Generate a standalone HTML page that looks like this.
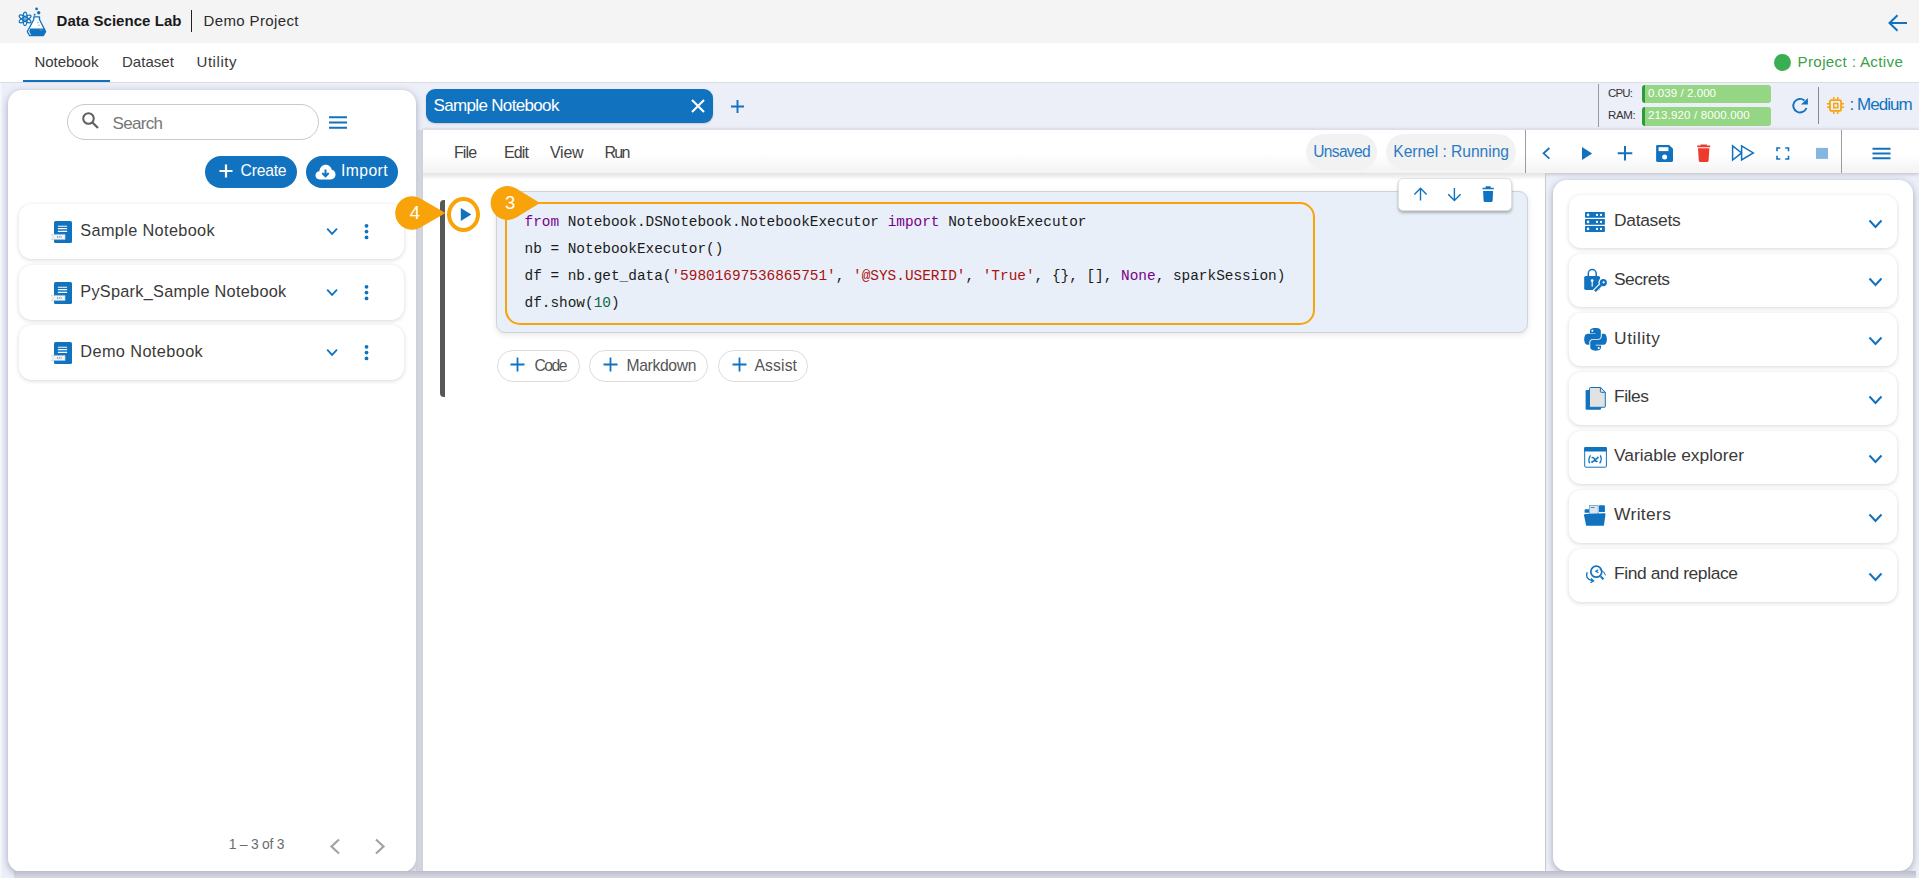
<!DOCTYPE html>
<html><head><meta charset="utf-8"><style>
html,body{margin:0;padding:0;width:1919px;height:878px;overflow:hidden;background:#eceff8;font-family:"Liberation Sans",sans-serif}
.box,.abs,.t{position:absolute;box-sizing:border-box}
.t{white-space:pre}
</style></head><body>
<div class="box" style="left:0;top:0;width:1919px;height:43px;background:#f4f4f4"></div><svg class="abs" style="left:17px;top:6px" width="32" height="32" viewBox="0 0 32 32">
<g fill="none" stroke="#1173bf" stroke-width="1.25">
<ellipse cx="8.1" cy="12.9" rx="6.7" ry="2.1" transform="rotate(90 8.1 12.9)"/>
<ellipse cx="8.1" cy="12.9" rx="6.7" ry="2.1" transform="rotate(30 8.1 12.9)"/>
<ellipse cx="8.1" cy="12.9" rx="6.7" ry="2.1" transform="rotate(-30 8.1 12.9)"/>
</g>
<circle cx="8.1" cy="12.9" r="1.2" fill="none" stroke="#1173bf" stroke-width="0.8"/>
<circle cx="19.6" cy="2.9" r="1.4" fill="#1173bf"/>
<circle cx="21.7" cy="6.7" r="1.7" fill="#1173bf"/>
<circle cx="17.6" cy="8.8" r="1" fill="#1173bf"/>
<path d="M16.8 10.8 H22.5 V13.5 L28.6 25.6 L26.3 29.6 H12.6 L10.3 25.6 L16.8 13.5 Z" fill="#fff" stroke="#1173bf" stroke-width="1.3" stroke-linejoin="round"/>
<path d="M13.2 22.4 H27.2 L28.6 25.6 L26.3 29.6 H14.3 L12.2 25.6 Z" fill="#1173bf"/>
<path d="M20 16.6 H21.8 M21 19.2 H22.8 M22.6 24 H25.4" stroke="#9a9a9a" stroke-width="0.8"/>
</svg><div class="t" style="left:56.50px;top:13.25px;font-size:15.00px;line-height:15.00px;color:#1a1a1a;font-weight:700;letter-spacing:0.052px;font-family:"Liberation Sans", sans-serif;">Data Science Lab</div><div class="box" style="left:190.5px;top:10px;width:1.6px;height:21.5px;background:#222"></div><div class="t" style="left:203.50px;top:13.25px;font-size:15.00px;line-height:15.00px;color:#2b2b2b;font-weight:400;letter-spacing:0.376px;font-family:"Liberation Sans", sans-serif;">Demo Project</div><svg class="abs" style="left:1887px;top:13px" width="22" height="20" viewBox="0 0 22 20">
<path d="M20 10 H3 M10.5 2.2 L2.5 10 L10.5 17.8" fill="none" stroke="#1173bf" stroke-width="2"/></svg><div class="box" style="left:0;top:43px;width:1919px;height:40px;background:#fff;border-bottom:1px solid #dcdde3"></div><div class="t" style="left:34.40px;top:54.45px;font-size:15.00px;line-height:15.00px;color:#3a3a3a;font-weight:400;letter-spacing:-0.030px;font-family:"Liberation Sans", sans-serif;">Notebook</div><div class="t" style="left:121.90px;top:54.45px;font-size:15.00px;line-height:15.00px;color:#3a3a3a;font-weight:400;letter-spacing:0.051px;font-family:"Liberation Sans", sans-serif;">Dataset</div><div class="t" style="left:196.50px;top:54.45px;font-size:15.00px;line-height:15.00px;color:#3a3a3a;font-weight:400;letter-spacing:0.556px;font-family:"Liberation Sans", sans-serif;">Utility</div><div class="box" style="left:23px;top:79.6px;width:87px;height:2.6px;background:#1173bf"></div><div class="box" style="left:1774px;top:54px;width:17px;height:17px;border-radius:50%;background:#3aaf52"></div><div class="t" style="left:1797.50px;top:54.28px;font-size:15.20px;line-height:15.20px;color:#3d9f49;font-weight:400;letter-spacing:0.331px;font-family:"Liberation Sans", sans-serif;">Project : Active</div><div class="box" style="left:0;top:83px;width:1919px;height:795px;background:#eceff8"></div><div class="box" style="left:0;top:83px;width:1.5px;height:795px;background:linear-gradient(90deg,#fbfbfd,#eef0f7)"></div><div class="box" style="left:8px;top:90px;width:408px;height:782px;background:#fff;border-radius:14px;box-shadow:0 2px 7px 0 rgba(40,50,80,.38)"></div><div class="box" style="left:67px;top:104px;width:252px;height:36px;border:1px solid #c9c9c9;border-radius:18px;background:#fff"></div><svg class="abs" style="left:81px;top:111px" width="19" height="19" viewBox="0 0 19 19">
<circle cx="7.5" cy="7.5" r="5.3" fill="none" stroke="#5f5f5f" stroke-width="2"/>
<path d="M11.5 11.5 L17 17" stroke="#5f5f5f" stroke-width="2.2"/></svg><div class="t" style="left:112.50px;top:114.65px;font-size:17.00px;line-height:17.00px;color:#767676;font-weight:400;letter-spacing:-0.673px;font-family:"Liberation Sans", sans-serif;">Search</div><svg class="abs" style="left:329px;top:116px" width="18" height="13" viewBox="0 0 18 13">
<path d="M0 1.2 H18 M0 6.5 H18 M0 11.8 H18" stroke="#1173bf" stroke-width="2"/></svg><div class="box" style="left:205px;top:156px;width:92px;height:32px;border-radius:16px;background:#1173bf"></div><svg class="abs" style="left:218.5px;top:164px" width="14" height="14" viewBox="0 0 14 14">
<path d="M7 0.5 V13.5 M0.5 7 H13.5" stroke="#fff" stroke-width="2.2"/></svg><div class="t" style="left:240.60px;top:162.85px;font-size:15.70px;line-height:15.70px;color:#fff;font-weight:400;letter-spacing:-0.225px;font-family:"Liberation Sans", sans-serif;">Create</div><div class="box" style="left:306px;top:156px;width:92px;height:32px;border-radius:16px;background:#1173bf"></div><svg class="abs" style="left:315px;top:164px" width="21" height="16" viewBox="0 0 21 16">
<path d="M5 15.5 C1.8 15.5 0.5 13.3 0.5 11.3 C0.5 9 2.2 7.3 4.4 7.2 C4.8 3.5 7.4 0.8 10.8 0.8 C13.8 0.8 16.2 2.8 16.8 5.8 C19 6.1 20.5 8 20.5 10.6 C20.5 13.4 18.6 15.5 15.8 15.5 Z" fill="#fff"/>
<path d="M10.5 5.5 V12 M7.3 9 L10.5 12.3 L13.7 9" stroke="#1173bf" stroke-width="2" fill="none"/></svg><div class="t" style="left:340.90px;top:162.85px;font-size:15.70px;line-height:15.70px;color:#fff;font-weight:400;letter-spacing:0.461px;font-family:"Liberation Sans", sans-serif;">Import</div><div class="box" style="left:19px;top:204px;width:385px;height:55px;border-radius:13px;background:#fff;box-shadow:0 1px 4px rgba(0,0,0,.16)"></div><svg class="abs" style="left:51px;top:221px" width="22" height="23" viewBox="0 0 22 23">
<rect x="3" y="0" width="18" height="22" rx="1.6" fill="#1173bf"/>
<path d="M6.9 5.3 H16.1 M6.9 7.6 H16.1 M6.9 10.4 H16.1" stroke="#fff" stroke-width="1.1"/>
<path d="M0.2 13.4 H14.1 V18.6 H0.2 L2.6 16 Z" fill="#f6f4f1" stroke="#a9c8e4" stroke-width="0.5"/>
<path d="M6.8 15 L6.2 16 L6.8 17 M9.8 15 L10.4 16 L9.8 17 M8.7 14.8 L7.9 17.2" fill="none" stroke="#3a83c6" stroke-width="0.6"/>
</svg><div class="t" style="left:80.30px;top:222.15px;font-size:16.30px;line-height:16.30px;color:#3a3a3a;font-weight:400;letter-spacing:0.352px;font-family:"Liberation Sans", sans-serif;">Sample Notebook</div><svg class="abs" style="left:326px;top:227px" width="13" height="9" viewBox="0 0 13 9">
<path d="M1.2 1.7 L6.1 6.9 L11 1.7" fill="none" stroke="#1173bf" stroke-width="1.8"/></svg><svg class="abs" style="left:363px;top:223px" width="6" height="17" viewBox="0 0 6 17">
<circle cx="3.5" cy="2.8" r="1.9" fill="#1173bf"/><circle cx="3.5" cy="8.6" r="1.9" fill="#1173bf"/><circle cx="3.5" cy="14.4" r="1.9" fill="#1173bf"/></svg><div class="box" style="left:19px;top:264.5px;width:385px;height:55px;border-radius:13px;background:#fff;box-shadow:0 1px 4px rgba(0,0,0,.16)"></div><svg class="abs" style="left:51px;top:281.5px" width="22" height="23" viewBox="0 0 22 23">
<rect x="3" y="0" width="18" height="22" rx="1.6" fill="#1173bf"/>
<path d="M6.9 5.3 H16.1 M6.9 7.6 H16.1 M6.9 10.4 H16.1" stroke="#fff" stroke-width="1.1"/>
<path d="M0.2 13.4 H14.1 V18.6 H0.2 L2.6 16 Z" fill="#f6f4f1" stroke="#a9c8e4" stroke-width="0.5"/>
<path d="M6.8 15 L6.2 16 L6.8 17 M9.8 15 L10.4 16 L9.8 17 M8.7 14.8 L7.9 17.2" fill="none" stroke="#3a83c6" stroke-width="0.6"/>
</svg><div class="t" style="left:80.30px;top:282.64px;font-size:16.30px;line-height:16.30px;color:#3a3a3a;font-weight:400;letter-spacing:0.266px;font-family:"Liberation Sans", sans-serif;">PySpark_Sample Notebook</div><svg class="abs" style="left:326px;top:287.5px" width="13" height="9" viewBox="0 0 13 9">
<path d="M1.2 1.7 L6.1 6.9 L11 1.7" fill="none" stroke="#1173bf" stroke-width="1.8"/></svg><svg class="abs" style="left:363px;top:283.5px" width="6" height="17" viewBox="0 0 6 17">
<circle cx="3.5" cy="2.8" r="1.9" fill="#1173bf"/><circle cx="3.5" cy="8.6" r="1.9" fill="#1173bf"/><circle cx="3.5" cy="14.4" r="1.9" fill="#1173bf"/></svg><div class="box" style="left:19px;top:325px;width:385px;height:55px;border-radius:13px;background:#fff;box-shadow:0 1px 4px rgba(0,0,0,.16)"></div><svg class="abs" style="left:51px;top:342px" width="22" height="23" viewBox="0 0 22 23">
<rect x="3" y="0" width="18" height="22" rx="1.6" fill="#1173bf"/>
<path d="M6.9 5.3 H16.1 M6.9 7.6 H16.1 M6.9 10.4 H16.1" stroke="#fff" stroke-width="1.1"/>
<path d="M0.2 13.4 H14.1 V18.6 H0.2 L2.6 16 Z" fill="#f6f4f1" stroke="#a9c8e4" stroke-width="0.5"/>
<path d="M6.8 15 L6.2 16 L6.8 17 M9.8 15 L10.4 16 L9.8 17 M8.7 14.8 L7.9 17.2" fill="none" stroke="#3a83c6" stroke-width="0.6"/>
</svg><div class="t" style="left:80.30px;top:343.14px;font-size:16.30px;line-height:16.30px;color:#3a3a3a;font-weight:400;letter-spacing:0.401px;font-family:"Liberation Sans", sans-serif;">Demo Notebook</div><svg class="abs" style="left:326px;top:348px" width="13" height="9" viewBox="0 0 13 9">
<path d="M1.2 1.7 L6.1 6.9 L11 1.7" fill="none" stroke="#1173bf" stroke-width="1.8"/></svg><svg class="abs" style="left:363px;top:344px" width="6" height="17" viewBox="0 0 6 17">
<circle cx="3.5" cy="2.8" r="1.9" fill="#1173bf"/><circle cx="3.5" cy="8.6" r="1.9" fill="#1173bf"/><circle cx="3.5" cy="14.4" r="1.9" fill="#1173bf"/></svg><div class="t" style="left:228.75px;top:838.38px;font-size:13.90px;line-height:13.90px;color:#6b6b6b;font-weight:400;letter-spacing:-0.251px;font-family:"Liberation Sans", sans-serif;">1 – 3 of 3</div><svg class="abs" style="left:328px;top:838px" width="60" height="17" viewBox="0 0 60 17">
<path d="M11 1.5 L3.5 8.5 L11 15.5" fill="none" stroke="#a3a3a3" stroke-width="2.2"/>
<path d="M48 1.5 L55.5 8.5 L48 15.5" fill="none" stroke="#a3a3a3" stroke-width="2.2"/></svg><div class="box" style="left:426px;top:89px;width:287px;height:34px;border-radius:9px;background:#1173bf;box-shadow:0 1px 2px rgba(0,0,0,.15)"></div><div class="t" style="left:433.50px;top:96.95px;font-size:17.00px;line-height:17.00px;color:#fff;font-weight:400;letter-spacing:-0.660px;font-family:"Liberation Sans", sans-serif;">Sample Notebook</div><svg class="abs" style="left:690px;top:99px" width="16" height="14" viewBox="0 0 16 14">
<path d="M2 1 L14 13 M14 1 L2 13" stroke="#fff" stroke-width="2.1"/></svg><svg class="abs" style="left:730px;top:99px" width="15" height="15" viewBox="0 0 15 15">
<path d="M7.5 1 V14 M1 7.5 H14" stroke="#1173bf" stroke-width="1.9"/></svg><div class="box" style="left:1598px;top:84px;width:1px;height:43px;background:#9a9a9a"></div><div class="t" style="left:1608.00px;top:87.52px;font-size:11.50px;line-height:11.50px;color:#333;font-weight:400;letter-spacing:-0.825px;font-family:"Liberation Sans", sans-serif;">CPU:</div><div class="t" style="left:1608.00px;top:109.52px;font-size:11.50px;line-height:11.50px;color:#333;font-weight:400;letter-spacing:-0.384px;font-family:"Liberation Sans", sans-serif;">RAM:</div><div class="box" style="left:1642px;top:85px;width:129px;height:17.5px;border-radius:3px;background:#95d684;border-left:3px solid #2e9a3a"></div><div class="box" style="left:1642px;top:107px;width:129px;height:19px;border-radius:3px;background:#95d684;border-left:3px solid #2e9a3a"></div><div class="t" style="left:1648.00px;top:87.82px;font-size:11.50px;line-height:11.50px;color:#fff;font-weight:400;letter-spacing:0.071px;font-family:"Liberation Sans", sans-serif;">0.039 / 2.000</div><div class="t" style="left:1648.00px;top:109.82px;font-size:11.50px;line-height:11.50px;color:#fff;font-weight:400;letter-spacing:0.152px;font-family:"Liberation Sans", sans-serif;">213.920 / 8000.000</div><svg class="abs" style="left:1790px;top:96px" width="19" height="19" viewBox="0 0 19 19">
<path d="M16.5 12 A6.8 6.8 0 1 1 14.4 4.4" fill="none" stroke="#1173bf" stroke-width="1.9"/>
<path d="M17.9 2 L17.9 8.4 L11 8.4 Z" fill="#1173bf"/></svg><div class="box" style="left:1817.5px;top:86.5px;width:1px;height:37px;background:#8a8a8a"></div><svg class="abs" style="left:1826px;top:96px" width="19" height="19" viewBox="0 0 19 19">
<rect x="3.95" y="4.05" width="11.1" height="10.7" rx="1.3" fill="none" stroke="#f9a30b" stroke-width="1.75"/>
<rect x="7.75" y="7.45" width="4.1" height="4.3" fill="none" stroke="#f9a30b" stroke-width="1.5"/>
<path d="M7.8 0.9 V3.3 M11.7 0.9 V3.3 M7.8 15.5 V18 M11.7 15.5 V18 M1 7.7 H3.2 M1 11.2 H3.2 M15.8 7.7 H18 M15.8 11.2 H18" stroke="#f9a30b" stroke-width="1.5"/></svg><div class="t" style="left:1849.40px;top:96.15px;font-size:17.00px;line-height:17.00px;color:#1173bf;font-weight:400;letter-spacing:-0.944px;font-family:"Liberation Sans", sans-serif;">: Medium</div><div class="box" style="left:423px;top:129px;width:1496px;height:44px;background:linear-gradient(#fff 55%,#f3f3f3);border-top:1px solid #dedfe4;box-shadow:0 1px 4px rgba(0,0,0,.22)"></div><div class="t" style="left:453.90px;top:144.80px;font-size:16.00px;line-height:16.00px;color:#444;font-weight:400;letter-spacing:-0.827px;font-family:"Liberation Sans", sans-serif;">File</div><div class="t" style="left:504.00px;top:144.80px;font-size:16.00px;line-height:16.00px;color:#444;font-weight:400;letter-spacing:-0.857px;font-family:"Liberation Sans", sans-serif;">Edit</div><div class="t" style="left:550.00px;top:144.80px;font-size:16.00px;line-height:16.00px;color:#444;font-weight:400;letter-spacing:-0.264px;font-family:"Liberation Sans", sans-serif;">View</div><div class="t" style="left:604.60px;top:144.80px;font-size:16.00px;line-height:16.00px;color:#444;font-weight:400;letter-spacing:-1.776px;font-family:"Liberation Sans", sans-serif;">Run</div><div class="box" style="left:1306px;top:134px;width:71px;height:36px;border-radius:18px;background:#f2f2f2"></div><div class="t" style="left:1313.30px;top:144.34px;font-size:15.60px;line-height:15.60px;color:#2b7bc4;font-weight:400;letter-spacing:-0.712px;font-family:"Liberation Sans", sans-serif;">Unsaved</div><div class="box" style="left:1386px;top:134px;width:130px;height:36px;border-radius:18px;background:#f2f2f2"></div><div class="t" style="left:1393.30px;top:144.34px;font-size:15.60px;line-height:15.60px;color:#2b7bc4;font-weight:400;letter-spacing:-0.034px;font-family:"Liberation Sans", sans-serif;">Kernel : Running</div><div class="box" style="left:1525px;top:130px;width:1px;height:43px;background:#9b9b9b"></div><div class="box" style="left:1841px;top:130px;width:1px;height:43px;background:#9b9b9b"></div><svg class="abs" style="left:1540px;top:144px" width="300" height="20" viewBox="0 0 300 20">
<path d="M9.4 4 L3.6 9.3 L9.4 14.6" fill="none" stroke="#1173bf" stroke-width="1.8"/>
<path d="M42 2.9 L52.2 9.5 L42 16 Z" fill="#1173bf"/>
<path d="M85 2 V16.6 M77.7 9.3 H92.3" stroke="#1173bf" stroke-width="2"/>
<path d="M117.4 1 H129.2 L133 4.8 V16.6 Q133 17.9 131.7 17.9 H117.4 Q116.1 17.9 116.1 16.6 V2.3 Q116.1 1 117.4 1 Z" fill="#1173bf"/>
<rect x="118.6" y="3.2" width="9.8" height="3.9" fill="#fff"/>
<circle cx="124.6" cy="12.9" r="2.5" fill="#fff"/>
<path d="M157.2 2.4 H170.2 M161.3 2.4 V1.2 H166.1 V2.4" stroke="#ec3b2e" stroke-width="1.6" fill="none"/>
<path d="M158 4.3 H169.4 L168.6 16.8 Q168.5 17.9 167.4 17.9 H160 Q158.9 17.9 158.8 16.8 Z" fill="#ec3b2e"/>
<path d="M192.6 1.8 L201.6 8.9 L192.6 16 Z M201.6 1.8 L213.3 8.9 L201.6 16 Z" fill="none" stroke="#1173bf" stroke-width="1.5"/>
<path d="M237 7.3 V4 H240.3 M245.2 4 H248.5 V7.3 M248.5 11.7 V15 H245.2 M240.3 15 H237 V11.7" fill="none" stroke="#1173bf" stroke-width="1.6"/>
<rect x="276" y="3.9" width="12" height="11" fill="#84b6de"/>
</svg><svg class="abs" style="left:1872px;top:147px" width="19" height="13" viewBox="0 0 19 13">
<path d="M0.5 1.7 H18.5 M0.5 6.5 H18.5 M0.5 11.2 H18.5" stroke="#1173bf" stroke-width="2"/></svg><div class="box" style="left:423px;top:173px;width:1123px;height:698px;background:#fff;border-right:1px solid #c9c9c9"></div><div class="box" style="left:416px;top:130px;width:7px;height:741px;background:linear-gradient(90deg,#cdd0d9,#d3d6df 60%,#ced1da)"></div><div class="box" style="left:423px;top:173px;width:1122px;height:7px;background:linear-gradient(#e2e2e2,rgba(255,255,255,0))"></div><div class="box" style="left:440px;top:200px;width:5px;height:197px;background:#575757;border-radius:4px 0 0 4px"></div><div class="box" style="left:496px;top:191px;width:1032px;height:142px;border-radius:9px;background:#e8eff8;border:1px solid #cfd2d6;box-shadow:0 2px 6px rgba(0,0,0,.1)"></div><div class="box" style="left:505px;top:202px;width:809.5px;height:123px;border-radius:15px;border:2px solid #f9a30b"></div><div class="t" style="left:524.5px;top:214.94px;font-family:'Liberation Mono',monospace;font-size:14.417px;line-height:14.417px;color:#1b1b1b"><span style="color:#770088">from</span> Notebook.DSNotebook.NotebookExecutor <span style="color:#770088">import</span> NotebookExecutor</div><div class="t" style="left:524.5px;top:241.94px;font-family:'Liberation Mono',monospace;font-size:14.417px;line-height:14.417px;color:#1b1b1b">nb = NotebookExecutor()</div><div class="t" style="left:524.5px;top:268.94px;font-family:'Liberation Mono',monospace;font-size:14.417px;line-height:14.417px;color:#1b1b1b">df = nb.get_data(<span style="color:#a11">'59801697536865751'</span>, <span style="color:#a11">'@SYS.USERID'</span>, <span style="color:#a11">'True'</span>, {}, [], <span style="color:#770088">None</span>, sparkSession)</div><div class="t" style="left:524.5px;top:295.94px;font-family:'Liberation Mono',monospace;font-size:14.417px;line-height:14.417px;color:#1b1b1b">df.show(<span style="color:#116644">10</span>)</div><div class="box" style="left:1397.5px;top:178.4px;width:114px;height:33px;border-radius:5px;background:#fff;border:1px solid #e0e0e0;box-shadow:0 2px 3px rgba(0,0,0,.28)"></div><svg class="abs" style="left:1410px;top:186px" width="90" height="17" viewBox="0 0 90 17">
<path d="M10.5 14.6 V2.6 M4.4 8.4 L10.5 2.3 L16.6 8.4" fill="none" stroke="#1173bf" stroke-width="1.4"/>
<path d="M44.4 2.1 V14 M38.2 8.3 L44.4 14.5 L50.6 8.3" fill="none" stroke="#1173bf" stroke-width="1.4"/>
<path d="M72.5 2.6 H83.8 M76.4 2.2 V1.1 H79.9 V2.2" stroke="#1173bf" stroke-width="1.5" fill="none"/>
<path d="M73.1 5 H83.1 L82.6 15.1 Q82.5 15.9 81.7 15.9 H74.5 Q73.7 15.9 73.6 15.1 Z" fill="#1173bf"/>
</svg><div class="box" style="left:447px;top:197px;width:33px;height:35px;border-radius:50%;border:4.6px solid #f9a30b;background:#fff"></div><svg class="abs" style="left:459px;top:206px" width="14" height="16" viewBox="0 0 14 16">
<path d="M1.8 1.9 L12.3 8.4 L1.8 14.9 Z" fill="#1173bf"/></svg><svg class="abs" style="left:380px;top:180px" width="180" height="60" viewBox="380 180 180 60">
<path d="M445.50 213.00 L420.43 198.47 A16.8 16.8 0 1 0 420.43 227.53 Z" fill="#f9a30b"/>
<path d="M540.00 203.00 L516.29 188.56 A16.9 16.9 0 1 0 516.29 217.44 Z" fill="#f9a30b"/>
</svg><div class="t" style="left:409.80px;top:204.08px;font-size:18.50px;line-height:18.50px;color:#fff;font-weight:400;letter-spacing:0.000px;font-family:"Liberation Sans", sans-serif;">4</div><div class="t" style="left:505.00px;top:194.47px;font-size:18.50px;line-height:18.50px;color:#fff;font-weight:400;letter-spacing:0.000px;font-family:"Liberation Sans", sans-serif;">3</div><div class="box" style="left:496.5px;top:349.5px;width:83px;height:32px;border-radius:16px;border:1px solid #dcdcdc;background:#fff"></div><svg class="abs" style="left:510.0px;top:356.5px" width="15" height="15" viewBox="0 0 15 15">
<path d="M7.5 0.5 V14.5 M0.5 7.5 H14.5" stroke="#1173bf" stroke-width="1.8"/></svg><div class="t" style="left:534.40px;top:357.65px;font-size:15.70px;line-height:15.70px;color:#555;font-weight:400;letter-spacing:-1.511px;font-family:"Liberation Sans", sans-serif;">Code</div><div class="box" style="left:589.3px;top:349.5px;width:119px;height:32px;border-radius:16px;border:1px solid #dcdcdc;background:#fff"></div><svg class="abs" style="left:602.8px;top:356.5px" width="15" height="15" viewBox="0 0 15 15">
<path d="M7.5 0.5 V14.5 M0.5 7.5 H14.5" stroke="#1173bf" stroke-width="1.8"/></svg><div class="t" style="left:626.50px;top:357.65px;font-size:15.70px;line-height:15.70px;color:#555;font-weight:400;letter-spacing:-0.346px;font-family:"Liberation Sans", sans-serif;">Markdown</div><div class="box" style="left:718px;top:349.5px;width:89.5px;height:32px;border-radius:16px;border:1px solid #dcdcdc;background:#fff"></div><svg class="abs" style="left:731.5px;top:356.5px" width="15" height="15" viewBox="0 0 15 15">
<path d="M7.5 0.5 V14.5 M0.5 7.5 H14.5" stroke="#1173bf" stroke-width="1.8"/></svg><div class="t" style="left:754.50px;top:357.65px;font-size:15.70px;line-height:15.70px;color:#555;font-weight:400;letter-spacing:0.126px;font-family:"Liberation Sans", sans-serif;">Assist</div><div class="box" style="left:1553px;top:180px;width:360px;height:691px;background:#fff;border-radius:14px;box-shadow:0 2px 7px 0 rgba(40,50,80,.38)"></div><div class="box" style="left:1569px;top:195.0px;width:328px;height:53px;border-radius:12px;background:#fff;box-shadow:0 1px 4px rgba(0,0,0,.16)"></div><div class="t" style="left:1614.00px;top:211.71px;font-size:17.40px;line-height:17.40px;color:#3a3a3a;font-weight:400;letter-spacing:-0.281px;font-family:"Liberation Sans", sans-serif;">Datasets</div><svg class="abs" style="left:1868px;top:218.5px" width="15" height="10" viewBox="0 0 15 10">
<path d="M1.5 1.5 L7.5 8 L13.5 1.5" fill="none" stroke="#1173bf" stroke-width="2"/></svg><div class="box" style="left:1569px;top:253.9px;width:328px;height:53px;border-radius:12px;background:#fff;box-shadow:0 1px 4px rgba(0,0,0,.16)"></div><div class="t" style="left:1614.00px;top:270.63px;font-size:17.40px;line-height:17.40px;color:#3a3a3a;font-weight:400;letter-spacing:-0.498px;font-family:"Liberation Sans", sans-serif;">Secrets</div><svg class="abs" style="left:1868px;top:277.4px" width="15" height="10" viewBox="0 0 15 10">
<path d="M1.5 1.5 L7.5 8 L13.5 1.5" fill="none" stroke="#1173bf" stroke-width="2"/></svg><div class="box" style="left:1569px;top:312.8px;width:328px;height:53px;border-radius:12px;background:#fff;box-shadow:0 1px 4px rgba(0,0,0,.16)"></div><div class="t" style="left:1614.00px;top:329.55px;font-size:17.40px;line-height:17.40px;color:#3a3a3a;font-weight:400;letter-spacing:0.578px;font-family:"Liberation Sans", sans-serif;">Utility</div><svg class="abs" style="left:1868px;top:336.3px" width="15" height="10" viewBox="0 0 15 10">
<path d="M1.5 1.5 L7.5 8 L13.5 1.5" fill="none" stroke="#1173bf" stroke-width="2"/></svg><div class="box" style="left:1569px;top:371.8px;width:328px;height:53px;border-radius:12px;background:#fff;box-shadow:0 1px 4px rgba(0,0,0,.16)"></div><div class="t" style="left:1614.00px;top:388.47px;font-size:17.40px;line-height:17.40px;color:#3a3a3a;font-weight:400;letter-spacing:-0.435px;font-family:"Liberation Sans", sans-serif;">Files</div><svg class="abs" style="left:1868px;top:395.3px" width="15" height="10" viewBox="0 0 15 10">
<path d="M1.5 1.5 L7.5 8 L13.5 1.5" fill="none" stroke="#1173bf" stroke-width="2"/></svg><div class="box" style="left:1569px;top:430.7px;width:328px;height:53px;border-radius:12px;background:#fff;box-shadow:0 1px 4px rgba(0,0,0,.16)"></div><div class="t" style="left:1614.00px;top:447.39px;font-size:17.40px;line-height:17.40px;color:#3a3a3a;font-weight:400;letter-spacing:-0.016px;font-family:"Liberation Sans", sans-serif;">Variable explorer</div><svg class="abs" style="left:1868px;top:454.2px" width="15" height="10" viewBox="0 0 15 10">
<path d="M1.5 1.5 L7.5 8 L13.5 1.5" fill="none" stroke="#1173bf" stroke-width="2"/></svg><div class="box" style="left:1569px;top:489.6px;width:328px;height:53px;border-radius:12px;background:#fff;box-shadow:0 1px 4px rgba(0,0,0,.16)"></div><div class="t" style="left:1614.00px;top:506.31px;font-size:17.40px;line-height:17.40px;color:#3a3a3a;font-weight:400;letter-spacing:0.371px;font-family:"Liberation Sans", sans-serif;">Writers</div><svg class="abs" style="left:1868px;top:513.1px" width="15" height="10" viewBox="0 0 15 10">
<path d="M1.5 1.5 L7.5 8 L13.5 1.5" fill="none" stroke="#1173bf" stroke-width="2"/></svg><div class="box" style="left:1569px;top:548.5px;width:328px;height:53px;border-radius:12px;background:#fff;box-shadow:0 1px 4px rgba(0,0,0,.16)"></div><div class="t" style="left:1614.00px;top:565.23px;font-size:17.40px;line-height:17.40px;color:#3a3a3a;font-weight:400;letter-spacing:-0.375px;font-family:"Liberation Sans", sans-serif;">Find and replace</div><svg class="abs" style="left:1868px;top:572.0px" width="15" height="10" viewBox="0 0 15 10">
<path d="M1.5 1.5 L7.5 8 L13.5 1.5" fill="none" stroke="#1173bf" stroke-width="2"/></svg><div class="box" style="left:14px;top:871px;width:1902px;height:7px;background:linear-gradient(#b9bdc8,#c6c9d4 40%,#d6d9e3)"></div><svg class="abs" style="left:1578px;top:205px" width="34" height="35" viewBox="0 0 34 35"><g fill="#1173bf"><rect x="7" y="7" width="19.9" height="5.8" rx="0.6"/><rect x="7" y="14" width="19.9" height="5.8" rx="0.6"/><rect x="7" y="21" width="19.9" height="5.9" rx="0.6"/></g>
<g fill="#fff"><circle cx="10" cy="9.9" r="1.3"/><circle cx="10" cy="16.9" r="1.3"/><circle cx="10" cy="23.9" r="1.3"/>
<rect x="18" y="8.9" width="2" height="2"/><rect x="22" y="8.9" width="2" height="2"/>
<rect x="18" y="15.9" width="2" height="2"/><rect x="22" y="15.9" width="2" height="2"/>
<rect x="18" y="22.9" width="2" height="2"/><rect x="22" y="22.9" width="2" height="2"/></g></svg><svg class="abs" style="left:1578px;top:263px" width="34" height="35" viewBox="0 0 34 35"><path d="M10.3 13.5 V10.5 A3.95 3.95 0 0 1 18.2 10.5 V13.5" fill="none" stroke="#1173bf" stroke-width="1.5"/>
<rect x="6.2" y="13" width="15.9" height="13.9" rx="1.6" fill="#1173bf"/>
<circle cx="14.2" cy="17.6" r="1.4" fill="#fff"/><rect x="13.6" y="17.6" width="1.2" height="6" fill="#fff"/>
<path d="M16.3 28.5 L22.5 22.3" stroke="#fff" stroke-width="4.2"/>
<circle cx="25.3" cy="19.6" r="4.9" fill="#fff"/>
<circle cx="25.3" cy="19.6" r="3.6" fill="#1173bf"/>
<path d="M17 28.2 L23 22.2" stroke="#1173bf" stroke-width="2.4"/>
<circle cx="25.6" cy="19.3" r="1.1" fill="#fff"/></svg><svg class="abs" style="left:1578px;top:322px" width="34" height="35" viewBox="0 0 34 35"><path transform="translate(6.2 4.4) scale(0.0507)" fill="#1173bf" d="M439.8 200.5c-7.7-30.9-22.3-54.2-53.4-54.2h-40.1v47.4c0 36.8-31.2 67.8-66.8 67.8H172.7c-29.2 0-53.4 25-53.4 54.3v101.8c0 29 25.2 46 53.4 54.3 33.8 9.9 66.3 11.7 106.8 0 26.9-7.8 53.4-23.5 53.4-54.3v-40.7H226.2v-13.6h160.2c31.1 0 42.6-21.7 53.4-54.2 11.2-33.5 10.7-65.7 0-108.6zM286.2 404c11.1 0 20.1 9.1 20.1 20.3 0 11.3-9 20.4-20.1 20.4-11 0-20.1-9.2-20.1-20.4.1-11.3 9.1-20.3 20.1-20.3zM167.8 248.1h106.8c29.7 0 53.4-24.5 53.4-54.3V91.9c0-29-24.4-50.7-53.4-55.6-35.8-5.900-74.7-5.600-106.8.1-45.2 8-53.4 24.7-53.4 55.6v40.7h106.9v13.6h-147c-31.1 0-58.3 18.7-66.8 54.2-9.8 40.7-10.2 66.1 0 108.6 7.600 31.6 25.7 54.2 56.8 54.2H101v-48.8c0-35.3 30.5-66.4 66.8-66.4zm-6.7-142.6c-11.1 0-20.1-9.1-20.1-20.3.1-11.3 9-20.4 20.1-20.4 11 0 20.1 9.2 20.1 20.4s-9 20.3-20.1 20.3z"/></svg><svg class="abs" style="left:1578px;top:381px" width="34" height="35" viewBox="0 0 34 35"><rect x="7.6" y="9" width="15.5" height="19.7" rx="1.2" fill="#1173bf"/>
<path d="M12.3 6.5 H22.6 L27.3 11.2 V25.3 Q27.3 26.3 26.3 26.3 H12.3 Q11.5 26.3 11.5 25.3 V7.5 Q11.5 6.5 12.3 6.5 Z" fill="#e2e2e2" stroke="#1173bf" stroke-width="1"/>
<path d="M22.4 6.5 V10.6 Q22.4 11.3 23.1 11.3 H27.3" fill="none" stroke="#1173bf" stroke-width="1"/></svg><svg class="abs" style="left:1578px;top:440px" width="34" height="35" viewBox="0 0 34 35"><rect x="6.7" y="7.5" width="21.7" height="19.7" rx="1" fill="#fff" stroke="#1173bf" stroke-width="1"/>
<rect x="6.2" y="7" width="22.7" height="4.6" rx="1" fill="#1173bf"/>
<path d="M12.6 15.3 Q9.6 19.3 11.8 23.3 M22.2 15.3 Q24.6 19.3 21.6 23.3" fill="none" stroke="#1173bf" stroke-width="1.3"/><path d="M13.6 17.9 Q15.6 16.8 16.6 19.2 Q17.6 21.9 19.6 21.3 M19.9 17.6 L14.2 22.1" fill="none" stroke="#1173bf" stroke-width="1.5"/><circle cx="19.8" cy="17.5" r="0.9" fill="#1173bf"/><circle cx="14" cy="21.9" r="0.9" fill="#1173bf"/></svg><svg class="abs" style="left:1578px;top:499px" width="34" height="35" viewBox="0 0 34 35"><path d="M6.6 11 Q6.6 10.2 7.5 10.2 H11 V13.8 H6.6 Z" fill="#1173bf"/>
<path d="M21 7 Q21 6.2 21.8 6.2 H26.1 Q26.9 6.2 26.9 7 V13 H21 Z" fill="#1173bf"/>
<rect x="11.4" y="6.4" width="8.8" height="8.8" fill="#dbe6f0" stroke="#6da0cf" stroke-width="0.8"/>
<path d="M12.8 8.5 H16.5" stroke="#1173bf" stroke-width="0.8"/>
<path d="M6 16.2 Q6 15.2 7 15 L26.5 14.3 Q27.6 14.3 27.5 15.3 L25.9 26.7 H8.2 Z" fill="#1173bf"/></svg><svg class="abs" style="left:1578px;top:558px" width="34" height="35" viewBox="0 0 34 35"><circle cx="18.3" cy="13.7" r="5.5" fill="none" stroke="#1173bf" stroke-width="1.7"/>
<path d="M22.6 18.4 L25.5 21.3" stroke="#1173bf" stroke-width="2"/>
<path d="M20.2 11.8 L17.8 13.3 L20.4 14.6" fill="none" stroke="#1173bf" stroke-width="1.2"/>
<path d="M21.8 11.5 Q26.8 13.5 27.6 17.4" fill="none" stroke="#1173bf" stroke-width="1"/>
<path d="M9.2 14.3 Q6.5 20.8 14.6 22.8" fill="none" stroke="#1173bf" stroke-width="1.4"/>
<path d="M12.9 20.6 L15.6 22.9 L12.5 24.8" fill="none" stroke="#1173bf" stroke-width="1.3"/></svg>
</body></html>
